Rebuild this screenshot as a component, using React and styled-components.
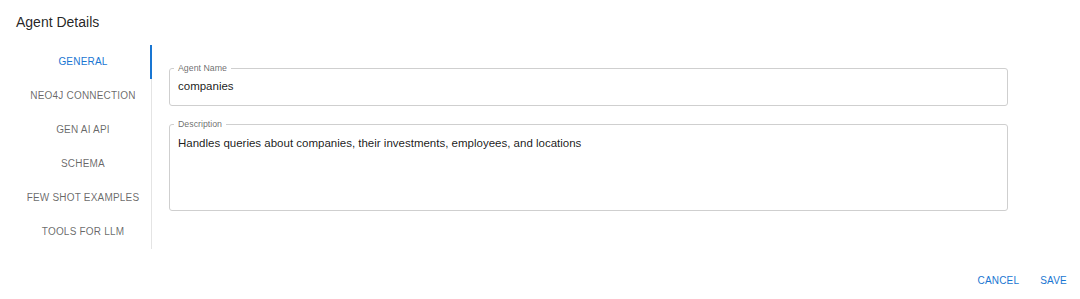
import React, { useState } from 'react';
import styled, { createGlobalStyle } from 'styled-components';

const GlobalStyle = createGlobalStyle`
    body {
        margin: 0;
        background: #ffffff;
        font-family: "Liberation Sans", Arial, sans-serif;
        color: rgba(0, 0, 0, 0.87);
    }
`;

const Dialog = styled.div`
    width: 1080px;
    height: 299px;
    background: #ffffff;
    display: flex;
    flex-direction: column;
`;

const Title = styled.h2`
    margin: 0;
    padding: 12px 16px 0;
    font-size: 14px;
    line-height: 20px;
    font-weight: 400;
    color: rgba(0, 0, 0, 0.87);
`;

const Body = styled.div`
    display: flex;
    margin-top: 13px;
    padding-left: 16px;
`;

const TabList = styled.div`
    width: 135px;
    display: flex;
    flex-direction: column;
    border-right: 1px solid #e4e4e4;
`;

const Tab = styled.button`
    height: 34px;
    margin-right: -1px;
    border: none;
    border-right: 2px solid ${p => (p.$active ? '#1976d2' : 'transparent')};
    background: none;
    font-family: "Liberation Sans", Arial, sans-serif;
    font-size: 10px;
    letter-spacing: 0.2px;
    text-transform: uppercase;
    color: ${p => (p.$active ? '#1976d2' : 'rgba(0, 0, 0, 0.6)')};
    cursor: pointer;
    padding: 0 0 2px;
`;

const Panel = styled.div`
    padding: 17px 0 0 17px;
    width: 839px;
    display: flex;
    flex-direction: column;
    gap: 12px;
`;

const Field = styled.fieldset`
    margin: 0;
    padding: 0 8px;
    border: 1px solid #cfcfcf;
    border-radius: 3px;
    min-width: 0;
`;

const Legend = styled.legend`
    margin-left: -4px;
    padding: 0 4px;
    font-size: 8.8px;
    line-height: 12px;
    color: rgba(0, 0, 0, 0.6);
`;

const Value = styled.div`
    font-size: 11.5px;
    line-height: 16px;
    color: rgba(0, 0, 0, 0.9);
    padding: ${p => (p.$multiline ? '5px 0 0' : '4px 0 0')};
    height: ${p => (p.$multiline ? '75px' : '27px')};
`;

const Actions = styled.div`
    display: flex;
    justify-content: flex-end;
    gap: 9px;
    padding: 19px 7px 0 0;
`;

const ActionButton = styled.button`
    height: 24px;
    padding: 0 6px;
    border: none;
    background: none;
    font-family: "Liberation Sans", Arial, sans-serif;
    font-size: 10px;
    letter-spacing: 0.2px;
    text-transform: uppercase;
    color: #1976d2;
    cursor: pointer;
`;

const tabs = [
    'General',
    'Neo4j Connection',
    'Gen AI API',
    'Schema',
    'Few Shot Examples',
    'Tools for LLM',
];

function App() {
    const [active, setActive] = useState(0);

    return (
        <>
            <GlobalStyle />
            <Dialog>
                <Title>Agent Details</Title>
                <Body>
                    <TabList>
                        {tabs.map((t, i) => (
                            <Tab key={t} $active={i === active} onClick={() => setActive(i)}>
                                {t}
                            </Tab>
                        ))}
                    </TabList>
                    <Panel>
                        <Field>
                            <Legend>Agent Name</Legend>
                            <Value>companies</Value>
                        </Field>
                        <Field>
                            <Legend>Description</Legend>
                            <Value $multiline>
                                Handles queries about companies, their investments, employees, and locations
                            </Value>
                        </Field>
                    </Panel>
                </Body>
                <Actions>
                    <ActionButton>Cancel</ActionButton>
                    <ActionButton>Save</ActionButton>
                </Actions>
            </Dialog>
        </>
    );
}

export default App;
